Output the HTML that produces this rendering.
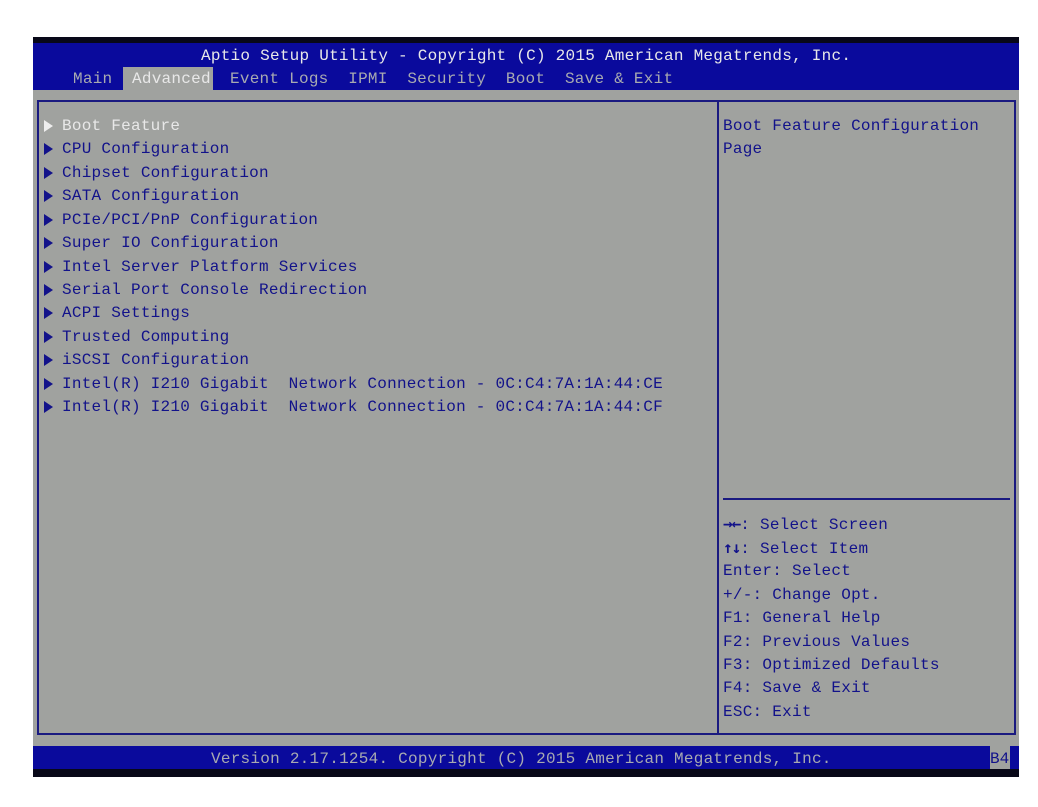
<!DOCTYPE html>
<html><head><meta charset="utf-8"><style>
*{margin:0;padding:0;box-sizing:border-box}
body{width:1038px;height:807px;background:#fff;position:relative;overflow:hidden;font-family:"Liberation Mono","DejaVu Sans Mono",monospace;font-size:16px;letter-spacing:0.25px}
.a{position:absolute;white-space:pre;line-height:20px;margin-top:1px}
#scr{position:absolute;left:33px;top:37px;width:986px;height:740px;background:#a0a29f}
#top{position:absolute;left:33px;top:37px;width:986px;height:6px;background:#080818}
#hdr{position:absolute;left:33px;top:43px;width:986px;height:47px;background:#0a0a9c}
#tab{position:absolute;left:123px;top:67px;width:90px;height:24px;background:#a0a29f}
#frame{position:absolute;left:37px;top:100px;width:979px;height:635px;border:2px solid #1a1a80}
#vdiv{position:absolute;left:717px;top:100px;width:2px;height:635px;background:#1a1a80}
#hdiv{position:absolute;left:723px;top:498px;width:287px;height:2px;background:#1a1a80}
#ftr{position:absolute;left:33px;top:746px;width:986px;height:23px;background:#0a0a9c}
#fblk{position:absolute;left:33px;top:769px;width:986px;height:8px;background:#080818}
#b4{position:absolute;left:990px;top:746px;width:20px;height:23px;background:#a0a29f}
.w{color:#e8e8e8}.g{color:#a8aab0}.b{color:#12128a}
.ar{font-weight:bold;letter-spacing:-1px;font-family:"DejaVu Sans Mono",monospace}
.tri{display:inline-block;width:0;height:0;border-top:6px solid transparent;border-bottom:6px solid transparent;border-left:9px solid #12128a;position:absolute;left:44px;margin-top:1px}
</style></head><body>
<div id="scr"></div><div id="top"></div><div id="hdr"></div><div id="tab"></div>
<div id="frame"></div><div id="vdiv"></div><div id="hdiv"></div>
<div id="ftr"></div><div id="fblk"></div><div id="b4"></div>
<div class="a w" style="left:201px;top:45px">Aptio Setup Utility - Copyright (C) 2015 American Megatrends, Inc.</div>
<div class="a g" style="left:73px;top:68px">Main</div>
<div class="a w" style="left:132px;top:68px">Advanced</div>
<div class="a g" style="left:230px;top:68px">Event Logs  IPMI  Security  Boot  Save &amp; Exit</div>

<span class="tri" style="top:119px;border-left-color:#eee"></span>
<div class="a w" style="left:62px;top:115px">Boot Feature</div>
<span class="tri" style="top:142px"></span><div class="a b" style="left:62px;top:138px">CPU Configuration</div>
<span class="tri" style="top:166px"></span><div class="a b" style="left:62px;top:162px">Chipset Configuration</div>
<span class="tri" style="top:189px"></span><div class="a b" style="left:62px;top:185px">SATA Configuration</div>
<span class="tri" style="top:213px"></span><div class="a b" style="left:62px;top:209px">PCIe/PCI/PnP Configuration</div>
<span class="tri" style="top:236px"></span><div class="a b" style="left:62px;top:232px">Super IO Configuration</div>
<span class="tri" style="top:260px"></span><div class="a b" style="left:62px;top:256px">Intel Server Platform Services</div>
<span class="tri" style="top:283px"></span><div class="a b" style="left:62px;top:279px">Serial Port Console Redirection</div>
<span class="tri" style="top:306px"></span><div class="a b" style="left:62px;top:302px">ACPI Settings</div>
<span class="tri" style="top:330px"></span><div class="a b" style="left:62px;top:326px">Trusted Computing</div>
<span class="tri" style="top:353px"></span><div class="a b" style="left:62px;top:349px">iSCSI Configuration</div>
<span class="tri" style="top:377px"></span><div class="a b" style="left:62px;top:373px">Intel(R) I210 Gigabit  Network Connection - 0C:C4:7A:1A:44:CE</div>
<span class="tri" style="top:400px"></span><div class="a b" style="left:62px;top:396px">Intel(R) I210 Gigabit  Network Connection - 0C:C4:7A:1A:44:CF</div>

<div class="a b" style="left:723px;top:115px">Boot Feature Configuration</div>
<div class="a b" style="left:723px;top:138px">Page</div>

<div class="a b" style="left:723px;top:513px"><span class="ar">→←</span>: Select Screen</div>
<div class="a b" style="left:723px;top:537px"><span class="ar">↑↓</span>: Select Item</div>
<div class="a b" style="left:723px;top:560px">Enter: Select</div>
<div class="a b" style="left:723px;top:584px">+/-: Change Opt.</div>
<div class="a b" style="left:723px;top:607px">F1: General Help</div>
<div class="a b" style="left:723px;top:631px">F2: Previous Values</div>
<div class="a b" style="left:723px;top:654px">F3: Optimized Defaults</div>
<div class="a b" style="left:723px;top:677px">F4: Save &amp; Exit</div>
<div class="a b" style="left:723px;top:701px">ESC: Exit</div>

<div class="a g" style="left:211px;top:748px">Version 2.17.1254. Copyright (C) 2015 American Megatrends, Inc.</div>
<div class="a b" style="left:990px;top:748px;letter-spacing:0">B4</div>
</body></html>
